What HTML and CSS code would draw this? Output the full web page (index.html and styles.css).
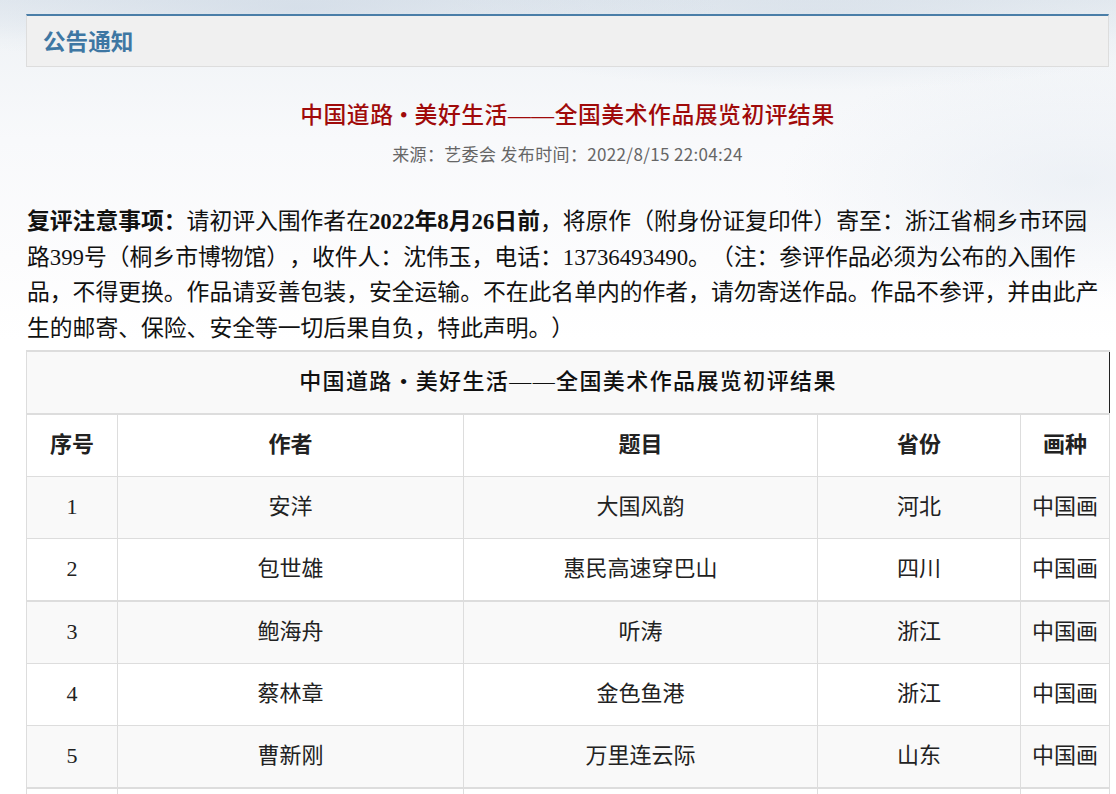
FILE: index.html
```html
<!DOCTYPE html>
<html lang="zh-CN">
<head>
<meta charset="utf-8">
<title>公告通知</title>
<link rel="stylesheet" href="styles.css">
</head>
<body>
<div class="page">
  <div class="notice-head"><h2>公告通知</h2></div>
  <h1 class="article-title">中国道路 • 美好生活——全国美术作品展览初评结果</h1>
  <div class="meta">来源：艺委会&nbsp;发布时间：2022/8/15 22:04:24</div>
  <p class="intro"><b>复评注意事项：</b>请初评入围作者在<b>2022年8月26日前</b>，将原作（附身份证复印件）寄至：浙江省桐乡市环园路399号（桐乡市博物馆），收件人：沈伟玉，电话：13736493490。（注：参评作品必须为公布的入围作品，不得更换。作品请妥善包装，安全运输。不在此名单内的作者，请勿寄送作品。作品不参评，并由此产生的邮寄、保险、安全等一切后果自负，特此声明。）</p>
  <table class="result">
    <colgroup>
      <col class="c1"><col class="c2"><col class="c3"><col class="c4"><col class="c5">
    </colgroup>
    <tr class="caption-row"><th colspan="5">中国道路 • 美好生活——全国美术作品展览初评结果</th></tr>
    <tr class="head-row thick"><th>序号</th><th>作者</th><th>题目</th><th>省份</th><th>画种</th></tr>
    <tr class="odd"><td>1</td><td>安洋</td><td>大国风韵</td><td>河北</td><td>中国画</td></tr>
    <tr><td>2</td><td>包世雄</td><td>惠民高速穿巴山</td><td>四川</td><td>中国画</td></tr>
    <tr class="odd thick"><td>3</td><td>鲍海舟</td><td>听涛</td><td>浙江</td><td>中国画</td></tr>
    <tr><td>4</td><td>蔡林章</td><td>金色鱼港</td><td>浙江</td><td>中国画</td></tr>
    <tr class="odd"><td>5</td><td>曹新刚</td><td>万里连云际</td><td>山东</td><td>中国画</td></tr>
    <tr class="thick next"><td></td><td></td><td></td><td></td><td></td></tr>
  </table>
</div>
</body>
</html>
```

FILE: styles.css
```css
html, body {
  margin: 0;
  padding: 0;
}
body {
  font-family: "Liberation Serif", "Noto Sans CJK SC", serif;
  color: #111;
  text-spacing-trim: space-all;
  background:
    radial-gradient(ellipse 420px 60px at 300px 8px, rgba(200, 212, 226, 0.55), rgba(255,255,255,0) 100%),
    radial-gradient(ellipse 380px 70px at 820px 20px, rgba(205, 216, 228, 0.5), rgba(255,255,255,0) 100%),
    radial-gradient(ellipse 300px 120px at 1080px 180px, rgba(225, 232, 240, 0.5), rgba(255,255,255,0) 100%),
    linear-gradient(#e4eaf0 0, #f1f4f7 40px, #f8f9fb 140px, #fcfcfd 260px, #fff 340px);
  background-repeat: no-repeat;
  height: 794px;
  overflow: hidden;
}
.page {
  width: 1083px;
  padding: 14px 0 0 26px;
}
.notice-head {
  height: 50px;
  border: 1px solid #ddd;
  border-top: 2px solid #4a7ea8;
  background: #f0f0f0;
  display: flex;
  align-items: center;
  padding-left: 16px;
}
.notice-head h2 {
  margin: 0;
  font-family: "Noto Sans CJK SC", sans-serif;
  font-size: 22.6px;
  font-weight: 700;
  color: #3e77a3;
  line-height: 30px;
}
.article-title {
  margin: 34px 0 0;
  text-align: center;
  font-family: "Liberation Serif", "Noto Sans CJK SC", serif;
  font-size: 22.8px;
  line-height: 30px;
  font-weight: 500;
  letter-spacing: 0.55px;
  color: #a00a0a;
}
.meta {
  margin-top: 13px;
  text-align: center;
  font-family: "Noto Sans CJK SC", sans-serif;
  font-size: 17px;
  line-height: 20px;
  letter-spacing: 0.35px;
  color: #666;
}
.intro {
  margin: 40px 0 0;
  padding-left: 1px;
  font-size: 22.8px;
  line-height: 35.7px;
  color: #111;
}
.intro b {
  font-weight: 700;
}
.result {
  margin-top: 3px;
  width: 1083px;
  border-collapse: collapse;
  table-layout: fixed;
  font-size: 22px;
  color: #222;
}
.c1 { width: 91px; }
.c2 { width: 346px; }
.c3 { width: 354px; }
.c4 { width: 203px; }
.c5 { width: 89px; }
.result th, .result td {
  border: 1px solid #ddd;
  text-align: center;
  padding: 0;
  height: 61px;
  line-height: 30px;
  white-space: nowrap;
}
.result th {
  font-weight: 700;
}
.caption-row th {
  border-top: 2px solid #ddd;
  border-right: 1px solid #222;
  background: #f9f9f9;
  height: 61px;
  font-weight: 500;
  letter-spacing: 1.4px;
  color: #111;
}
.head-row th {
  background: #fff;
}
.result tr.thick > * {
  border-top: 2px solid #ddd;
}
.result tr td {
  background: #fff;
}
.result tr.odd td {
  background: #f9f9f9;
}
```
